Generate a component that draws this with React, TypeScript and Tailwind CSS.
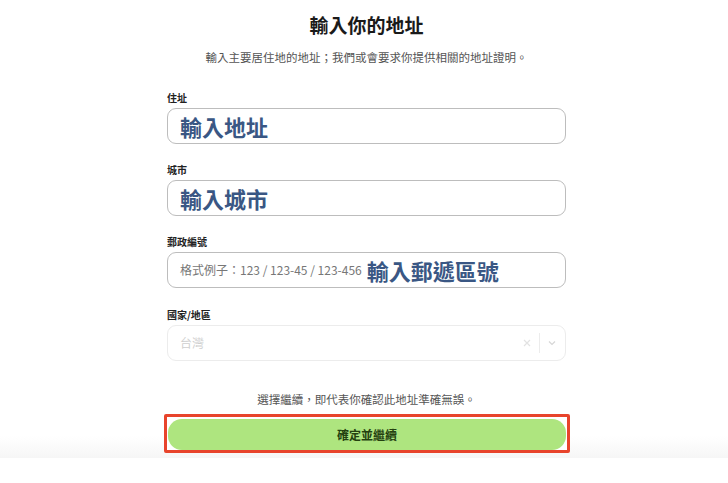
import React from 'react';

const FONT = { fontFamily: '"Noto Sans CJK TC", "Noto Sans", sans-serif' };

const Label: React.FC<{ text: string }> = ({ text }) => (
  <label className="block text-[10px] font-bold leading-[14px] text-[#222] mb-[3px]">{text}</label>
);

const Note: React.FC<{ text: string }> = ({ text }) => (
  <span className="text-[22px] font-bold leading-none text-[#3a5784]">{text}</span>
);

const App: React.FC = () => {
  return (
    <div style={FONT} className="w-[728px] h-[483px] bg-white relative overflow-hidden">
      <div className="w-[399px] ml-[167px] pt-[11px]">
        <h1 className="text-center text-[19px] font-bold leading-[28px] text-[#1a1a1a]">輸入你的地址</h1>
        <p className="text-center text-[11.5px] leading-[16px] text-[#555] mt-[10px]">
          輸入主要居住地的地址；我們或會要求你提供相關的地址證明。
        </p>

        <div className="mt-[26px]">
          <Label text="住址" />
          <div className="h-[36px] rounded-[9px] border border-[#bdbdbd] flex items-center pl-[12px]">
            <Note text="輸入地址" />
          </div>
        </div>

        <div className="mt-[19px]">
          <Label text="城市" />
          <div className="h-[36px] rounded-[9px] border border-[#bdbdbd] flex items-center pl-[12px]">
            <Note text="輸入城市" />
          </div>
        </div>

        <div className="mt-[19px]">
          <Label text="郵政編號" />
          <div className="h-[36px] rounded-[9px] border border-[#bdbdbd] flex items-center pl-[12px] gap-[5px]">
            <span className="text-[12px] text-[#777]">格式例子：123 / 123-45 / 123-456</span>
            <Note text="輸入郵遞區號" />
          </div>
        </div>

        <div className="mt-[20px]">
          <Label text="國家/地區" />
          <div className="h-[36px] rounded-[9px] border border-[#ececec] flex items-center pl-[12px] pr-[8px]">
            <span className="text-[12px] text-[#cfcfcf] flex-1">台灣</span>
            <svg width="10" height="10" viewBox="0 0 10 10" className="mr-[7px]">
              <path d="M2 2 L8 8 M8 2 L2 8" stroke="#e2e2e2" strokeWidth="1.2" />
            </svg>
            <div className="w-px h-[20px] bg-[#ececec]" />
            <svg width="10" height="10" viewBox="0 0 10 10" className="ml-[7px]">
              <path d="M2 3.5 L5 6.5 L8 3.5" stroke="#d6d6d6" strokeWidth="1.2" fill="none" />
            </svg>
          </div>
        </div>

        <p className="text-center text-[11.5px] leading-[16px] text-[#555] mt-[30px]">
          選擇繼續，即代表你確認此地址準確無誤。
        </p>
      </div>

      <div className="absolute left-0 top-[436px] w-full h-[22px] bg-gradient-to-b from-white to-[#f6f6f6]" />

      <div className="relative w-[406px] ml-[164px] mt-[7px] border-[3px] border-[#e8442c] rounded-[2px] pt-[2px] px-[1px] bg-white">
        <button className="w-full h-[31px] rounded-[14px] bg-[#aee57f] text-[12px] font-bold text-[#24400f]">
          確定並繼續
        </button>
      </div>
    </div>
  );
};

export default App;
